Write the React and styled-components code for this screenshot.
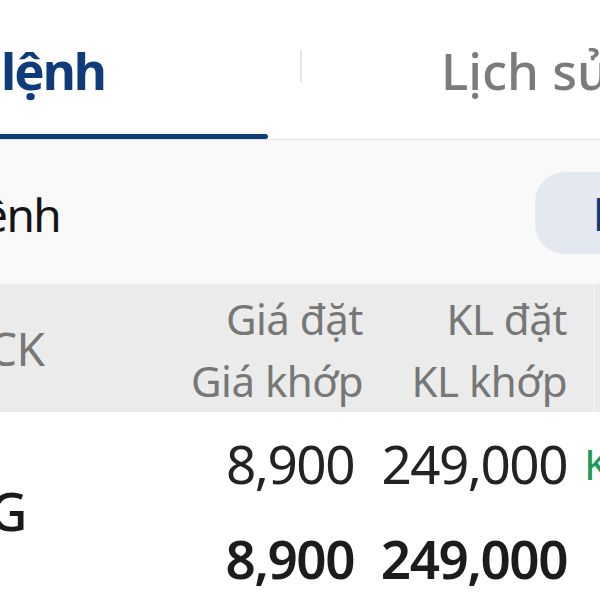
import React from "react";
import styled, { createGlobalStyle } from "styled-components";

const GlobalStyle = createGlobalStyle`
  html, body { margin: 0; padding: 0; background: #ffffff; }
  body { font-family: "Noto Sans", "Open Sans", sans-serif; }
`;

const NAVY = "#0e3c7a";

const Screen = styled.div`
  width: 600px;
  height: 600px;
  overflow: hidden;
  display: flex;
  flex-direction: column;
  background: #ffffff;
  font-family: "Noto Sans", "Open Sans", sans-serif;
`;

const TabBar = styled.div`
  flex: 0 0 140px;
  box-sizing: border-box;
  display: flex;
  align-items: flex-start;
  background: #ffffff;
  border-bottom: 1px solid #e3e3e3;
`;

const Tab = styled.div`
  position: relative;
  flex: 0 0 ${(p) => (p.$width ? `${p.$width}px` : "auto")};
  align-self: stretch;
  box-sizing: border-box;
  padding-top: 35px;
  padding-left: ${(p) => p.$pad || 0}px;
  font-size: 51px;
  line-height: 70px;
  white-space: nowrap;
  font-weight: ${(p) => (p.$active ? 700 : 500)};
  letter-spacing: ${(p) => (p.$active ? "-2px" : "0")};
  color: ${(p) => (p.$active ? NAVY : "#7b7b7b")};

  &::after {
    content: "";
    display: ${(p) => (p.$active ? "block" : "none")};
    position: absolute;
    left: 0;
    bottom: 0;
    width: 268px;
    height: 5px;
    border-radius: 0 3px 3px 0;
    background: ${NAVY};
  }
`;

const TabDivider = styled.div`
  flex: 0 0 2px;
  height: 32px;
  margin-top: 50px;
  background: #e6e6e6;
`;

const FilterBar = styled.div`
  flex: 0 0 144px;
  display: grid;
  grid-template-columns: 535px auto;
  align-items: start;
  background: #f9f9f9;
`;

const FilterLabel = styled.div`
  padding-top: 44px;
  margin-left: -18px;
  font-size: 46px;
  line-height: 60px;
  letter-spacing: -1.5px;
  color: #141414;
  white-space: nowrap;
`;

const FilterButton = styled.div`
  margin-top: 32px;
  height: 82px;
  width: 220px;
  box-sizing: border-box;
  padding-left: 58px;
  border-radius: 30px 0 0 30px;
  background: #e4e9f1;
  color: ${NAVY};
  font-size: 46px;
  font-weight: 700;
  line-height: 82px;
  white-space: nowrap;
`;

const COLUMNS = "190px 175px 205px 1fr";

const HeaderRow = styled.div`
  flex: 0 0 127px;
  box-sizing: border-box;
  display: grid;
  grid-template-columns: ${COLUMNS};
  align-items: start;
  padding-top: 4px;
  background: #ebebeb;
  color: #777777;
  font-size: 42px;
  line-height: 62px;
  letter-spacing: -0.5px;
  white-space: nowrap;
`;

const HeadCell = styled.div`
  text-align: ${(p) => p.$align || "right"};
  padding-right: ${(p) => p.$pr || 0}px;
  align-self: ${(p) => (p.$center ? "center" : "start")};
  margin-left: ${(p) => p.$ml || 0}px;
  margin-top: ${(p) => p.$mt || 0}px;
  font-size: ${(p) => p.$size || 42}px;
`;

const HeadLine = styled.span`
  display: block;
`;

const ColumnEdge = styled.div`
  align-self: stretch;
  margin-left: 23px;
  margin-top: -4px;
  border-left: 2px solid #f3f3f3;
`;

const DataRow = styled.div`
  flex: 1 1 auto;
  display: grid;
  grid-template-columns: ${COLUMNS};
  align-items: start;
  padding-top: 4px;
  background: #ffffff;
  white-space: nowrap;
`;

const SymbolCell = styled.div`
  align-self: start;
  margin-top: 47px;
  margin-left: -11px;
  font-size: 53px;
  line-height: 95px;
  font-weight: 500;
  color: #1a1a1a;
`;

const NumCell = styled.div`
  text-align: right;
  padding-right: ${(p) => p.$pr || 0}px;
  font-size: 53px;
  line-height: 95px;
  letter-spacing: -1.5px;
`;

const NumLine = styled.span`
  display: block;
  font-weight: ${(p) => (p.$strong ? 600 : 400)};
  color: ${(p) => (p.$strong ? "#1c1c1c" : "#232323")};
`;

const StatusCell = styled.div`
  padding-left: 14px;
  font-size: 42px;
  line-height: 95px;
  color: #1d9a55;
`;

export default function App() {
  return (
    <>
      <GlobalStyle />
      <Screen>
        <TabBar>
          <Tab $active $width={300} $pad={1}>
            lệnh
          </Tab>
          <TabDivider />
          <Tab $pad={139}>Lịch sử</Tab>
        </TabBar>

        <FilterBar>
          <FilterLabel>ệnh</FilterLabel>
          <FilterButton>Lọc</FilterButton>
        </FilterBar>

        <HeaderRow>
          <HeadCell $align="left" $center $ml={-12} $mt={-4} $size={46}>
            CK
          </HeadCell>
          <HeadCell $pr={2}>
            <HeadLine>Giá đặt</HeadLine>
            <HeadLine>Giá khớp</HeadLine>
          </HeadCell>
          <HeadCell $pr={3}>
            <HeadLine>KL đặt</HeadLine>
            <HeadLine>KL khớp</HeadLine>
          </HeadCell>
          <ColumnEdge />
        </HeaderRow>

        <DataRow>
          <SymbolCell>G</SymbolCell>
          <NumCell $pr={11}>
            <NumLine>8,900</NumLine>
            <NumLine $strong>8,900</NumLine>
          </NumCell>
          <NumCell $pr={3}>
            <NumLine>249,000</NumLine>
            <NumLine $strong>249,000</NumLine>
          </NumCell>
          <StatusCell>Khớp</StatusCell>
        </DataRow>
      </Screen>
    </>
  );
}
